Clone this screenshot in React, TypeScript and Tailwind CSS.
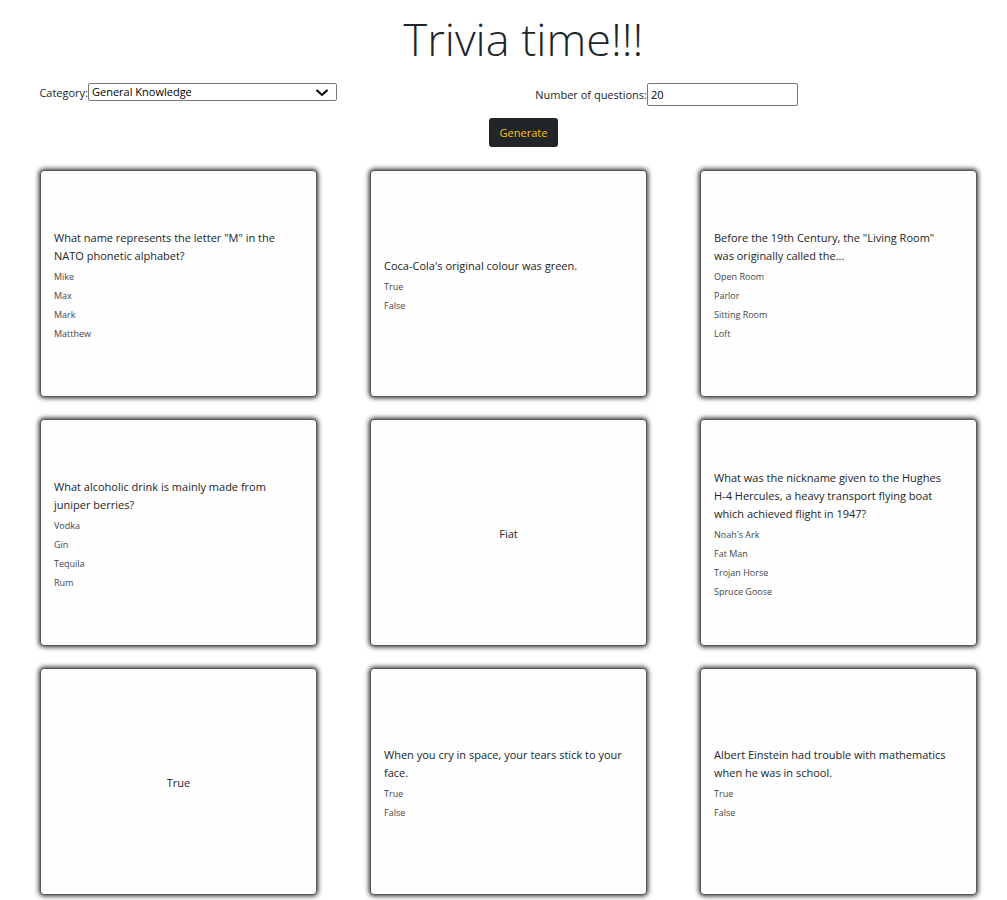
type Card = { question: string; options: string[] } | { answer: string };

const cards: Card[] = [
  {
    question: 'What name represents the letter "M" in the NATO phonetic alphabet?',
    options: ["Mike", "Max", "Mark", "Matthew"],
  },
  { question: "Coca-Cola's original colour was green.", options: ["True", "False"] },
  {
    question: 'Before the 19th Century, the "Living Room" was originally called the...',
    options: ["Open Room", "Parlor", "Sitting Room", "Loft"],
  },
  {
    question: "What alcoholic drink is mainly made from juniper berries?",
    options: ["Vodka", "Gin", "Tequila", "Rum"],
  },
  { answer: "Fiat" },
  {
    question:
      "What was the nickname given to the Hughes H-4 Hercules, a heavy transport flying boat which achieved flight in 1947?",
    options: ["Noah's Ark", "Fat Man", "Trojan Horse", "Spruce Goose"],
  },
  { answer: "True" },
  {
    question: "When you cry in space, your tears stick to your face.",
    options: ["True", "False"],
  },
  {
    question: "Albert Einstein had trouble with mathematics when he was in school.",
    options: ["True", "False"],
  },
];

function Flashcard({ card }: { card: Card }) {
  return (
    <article className="flex min-h-[227px] items-center justify-center rounded border border-[#54585c] bg-[#fefefe] px-[13px] pt-3.5 pb-3 shadow-[0_0_5px_1px_#212529]">
      {"answer" in card ? (
        <p>{card.answer}</p>
      ) : (
        <div className="w-full pr-2">
          <h2>{card.question}</h2>
          <ul>
            {card.options.map((option) => (
              <li key={option} className="mt-[5px] text-[9px] leading-[14px] text-[#42474b]">
                {option}
              </li>
            ))}
          </ul>
        </div>
      )}
    </article>
  );
}

export default function App() {
  return (
    <main className="min-h-screen bg-white pb-6 font-['Open_Sans','Noto_Sans',sans-serif] text-[11px] leading-[18px] text-[#212529]">
      <h1 className="pt-2.5 pl-10 text-center text-[45px] leading-[58px] font-light">Trivia time!!!</h1>

      <form onSubmit={(event) => event.preventDefault()}>
        <div className="grid grid-cols-2 gap-[21px] pt-[15px] pl-[38px]">
          <div className="flex items-start">
            <label htmlFor="category" className="w-[50px] shrink-0 text-right leading-5 whitespace-nowrap">
              Category:
            </label>
            <div className="relative w-[249px]">
              <select
                id="category"
                className="block h-[18px] w-full appearance-none rounded-xs border border-[#767676] bg-white pr-6 pl-[3px] leading-4 text-black"
              >
                <option>General Knowledge</option>
              </select>
              <svg
                viewBox="0 0 14 8"
                className="pointer-events-none absolute top-[6px] right-[8px] h-2 w-3.5"
                fill="none"
                stroke="#000"
                strokeWidth="2"
              >
                <path d="M1.5 1L7 6L12.5 1" />
              </svg>
            </div>
          </div>
          <div className="flex items-center">
            <label htmlFor="amount" className="w-[114px] shrink-0 text-right whitespace-nowrap">
              Number of questions:
            </label>
            <input
              id="amount"
              type="text"
              inputMode="numeric"
              defaultValue="20"
              className="h-[23px] w-[151px] rounded-xs border border-[#767676] bg-white px-[3px] text-black"
            />
          </div>
        </div>
        <div className="flex justify-center pt-3 pl-10">
          <button type="submit" className="h-[29px] rounded-[3px] bg-[#212529] px-[11px] text-[#ffc107]">
            Generate
          </button>
        </div>
      </form>

      <section className="grid grid-cols-3 gap-x-[53px] gap-y-[22px] pt-[23px] pr-[30px] pl-10">
        {cards.map((card, index) => (
          <Flashcard key={index} card={card} />
        ))}
      </section>
    </main>
  );
}
